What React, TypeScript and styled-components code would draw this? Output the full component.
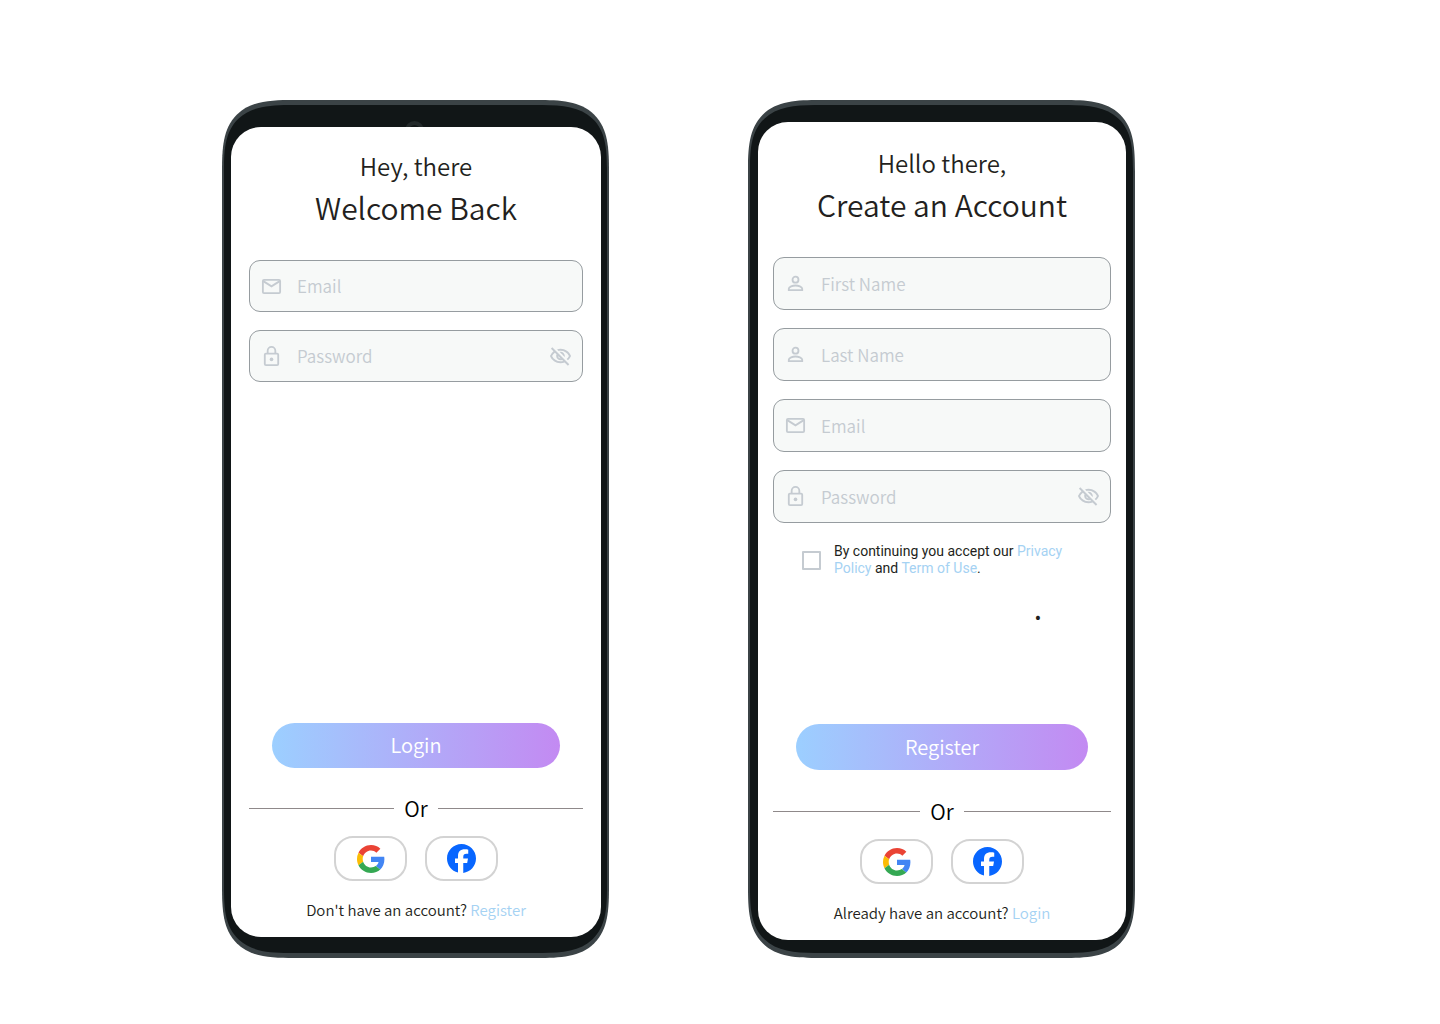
import React, { useId } from "react";
import styled, { createGlobalStyle } from "styled-components";
import { FaFacebook } from "react-icons/fa6";

const font = `"Noto Sans CJK SC", "Noto Sans", sans-serif`;

const GlobalStyle = createGlobalStyle`
  * { box-sizing: border-box; }
  body {
    margin: 0;
    background: #ffffff;
    color: #231f20;
    font-family: ${font};
  }
  button, input { font-family: inherit; }
`;

type Size = "regular" | "tall";

const Page = styled.main`
  display: flex;
  flex-wrap: wrap;
  justify-content: center;
  gap: 64px 139px;
  min-height: 100vh;
  padding: 100px 83px 66px 0;
`;

const Phone = styled.section<{ $size: Size }>`
  position: relative;
  display: flex;
  width: 387px;
  min-height: 858px;
  background: #111617;
  border: solid #3b4346;
  border-width: 5px 2px;
  border-radius: 50px;
  padding: ${(p) => (p.$size === "tall" ? "17px 7px 13px 8px" : "22px 6px 16px 7px")};

  @supports (corner-shape: superellipse(1.6)) {
    border-radius: 72px;
    corner-shape: superellipse(1.6);
  }
`;

const Camera = styled.span`
  position: absolute;
  top: 16px;
  left: 50%;
  width: 19px;
  height: 19px;
  margin-left: -11px;
  border: 4px solid #23292a;
  border-radius: 50%;
`;

const Screen = styled.form<{ $size: Size }>`
  position: relative;
  flex: 1;
  display: flex;
  flex-direction: column;
  background: #ffffff;
  border-radius: 30px;
  padding: ${(p) => (p.$size === "tall" ? "25px 15px 17px" : "23px 18px 17px")};
`;

const Greeting = styled.p`
  margin: 0 0 5px;
  font-size: 24px;
  line-height: 32px;
  font-weight: 350;
  text-align: center;
`;

const Title = styled.h1`
  margin: 0 0 33px;
  font-size: 30px;
  line-height: 40px;
  font-weight: 350;
  text-align: center;
`;

const Fields = styled.div`
  display: flex;
  flex-direction: column;
  gap: 18px;
`;

const FieldBox = styled.label<{ $size: Size }>`
  display: flex;
  align-items: center;
  gap: 14px;
  height: ${(p) => (p.$size === "tall" ? 53 : 52)}px;
  padding: 0 10px;
  background: #f7f9f8;
  border: 1px solid #969ca0;
  border-radius: 11px;
  color: #c5cbd1;

  svg { flex: none; display: block; }
`;

const Input = styled.input`
  flex: 1;
  min-width: 0;
  padding: 0;
  border: 0;
  outline: 0;
  background: transparent;
  color: #231f20;
  font-size: 17px;
  line-height: 24px;
  font-weight: 350;

  &::placeholder { color: #c5cbd1; opacity: 1; }
`;

const IconButton = styled.button`
  flex: none;
  padding: 0;
  border: 0;
  background: none;
  color: inherit;
  cursor: pointer;
`;

const Consent = styled.div`
  display: flex;
  align-items: center;
  gap: 13px;
  margin: 20px 28px 0 29px;
`;

const Checkbox = styled.input`
  appearance: none;
  flex: none;
  width: 19px;
  height: 19px;
  margin: 0;
  border: 2px solid #c5cbd1;
  border-radius: 1px;
  &:checked { background: #9fcfee; }
`;

const ConsentText = styled.label`
  font-family: Roboto, sans-serif;
  font-size: 14px;
  line-height: 17px;
`;

const Link = styled.a`
  color: #a5d2f3;
  text-decoration: none;
`;

const Mark = styled.span`
  align-self: flex-end;
  margin: 15px 69px 0 0;
  font-size: 30px;
  line-height: 30px;
`;

const Actions = styled.div`
  display: flex;
  flex-direction: column;
  align-items: center;
  margin-top: auto;
`;

const Submit = styled.button<{ $size: Size }>`
  align-self: stretch;
  height: ${(p) => (p.$size === "tall" ? 46 : 45)}px;
  margin: 0 23px ${(p) => (p.$size === "tall" ? 27 : 26)}px;
  padding: 0 0 1px;
  border: 0;
  border-radius: 23px;
  background: linear-gradient(90deg, #9ccfff 0%, #c38af2 100%);
  color: #ffffff;
  font-size: 20px;
  line-height: 28px;
  font-weight: 350;
  cursor: pointer;
`;

const Divider = styled.div`
  align-self: stretch;
  display: flex;
  align-items: center;
  gap: 10px;
  margin-bottom: 14px;
  color: #000000;
  font-size: 21px;
  line-height: 28px;
  font-weight: 350;

  &::before, &::after {
    content: "";
    flex: 1;
    height: 1px;
    background: #8f898a;
  }
`;

const Socials = styled.div`
  display: flex;
  gap: 18px;
  margin-bottom: 19px;
`;

const SocialButton = styled.button`
  display: flex;
  align-items: center;
  justify-content: center;
  width: 73px;
  height: 45px;
  padding: 0;
  border: 2px solid #d3d3d3;
  border-radius: 19px;
  background: #ffffff;
  color: #0866ff;
  cursor: pointer;
`;

const Footer = styled.p`
  margin: 0;
  font-size: 15px;
  line-height: 20px;
  font-weight: 350;
`;

const stroke = { fill: "none", stroke: "currentColor", strokeWidth: 1.9 };

const MailIcon = () => (
  <svg width="23" height="23" viewBox="0 0 24 24" aria-hidden="true" {...stroke}>
    <rect x="3" y="5" width="18" height="14" rx="1.2" />
    <path d="M3.4 6.4 12 11.8l8.6-5.4" />
  </svg>
);

const LockIcon = () => (
  <svg width="23" height="23" viewBox="0 0 24 24" aria-hidden="true" {...stroke}>
    <rect x="5" y="9" width="14" height="12" rx="1.2" />
    <path d="M8 9V6a4 4 0 0 1 8 0v3" />
    <circle cx="12" cy="15" r="1.9" fill="currentColor" stroke="none" />
  </svg>
);

const PersonIcon = () => (
  <svg width="23" height="23" viewBox="0 0 24 24" aria-hidden="true" {...stroke}>
    <circle cx="12" cy="8" r="3.1" />
    <path d="M5 19v-1.4c0-2.2 4.1-3.5 7-3.5s7 1.3 7 3.5V19z" />
  </svg>
);

const EyeOffIcon = () => (
  <svg width="23" height="23" viewBox="0 0 24 24" aria-hidden="true" display="block">
    <path
      fill="currentColor"
      d="M12 6c3.79 0 7.17 2.13 8.82 5.5-.59 1.22-1.42 2.27-2.41 3.12l1.41 1.41c1.39-1.23 2.49-2.77 3.18-4.53C21.27 7.11 17 4 12 4c-1.27 0-2.49.2-3.64.57l1.65 1.65C10.66 6.09 11.32 6 12 6zm-1.07 1.14L13 9.21c.57.25 1.03.71 1.28 1.28l2.07 2.07c.08-.34.14-.7.14-1.07C16.5 9.01 14.48 7 12 7c-.37 0-.72.05-1.07.14zM2.01 3.87l2.68 2.68A11.738 11.738 0 0 0 1 11.5C2.73 15.89 7 19 12 19c1.52 0 2.98-.29 4.32-.82l3.42 3.42 1.41-1.41L3.42 2.45 2.01 3.87zm7.5 7.5 2.61 2.61c-.04.01-.08.02-.12.02a2.5 2.5 0 0 1-2.5-2.5c0-.05.01-.08.01-.13zm-3.4-3.4 1.75 1.75a4.6 4.6 0 0 0-.36 1.78 4.507 4.507 0 0 0 6.27 4.14l.98.98c-.88.24-1.8.38-2.75.38-3.79 0-7.17-2.13-8.82-5.5.7-1.43 1.72-2.61 2.93-3.53z"
    />
  </svg>
);

const GoogleLogo = () => (
  <svg width="28" height="28" viewBox="0 0 48 48" aria-hidden="true">
    <path fill="#EA4335" d="M24 9.5c3.54 0 6.71 1.22 9.21 3.6l6.85-6.85C35.9 2.38 30.47 0 24 0 14.62 0 6.51 5.38 2.56 13.22l7.98 6.19C12.43 13.72 17.74 9.5 24 9.5z" />
    <path fill="#4285F4" d="M46.98 24.55c0-1.57-.15-3.09-.38-4.55H24v9.02h12.94c-.58 2.96-2.26 5.48-4.78 7.18l7.73 6c4.51-4.18 7.09-10.36 7.09-17.65z" />
    <path fill="#FBBC05" d="M10.53 28.59A14.5 14.5 0 0 1 9.77 24c0-1.6.27-3.14.76-4.59l-7.98-6.19A23.99 23.99 0 0 0 0 24c0 3.88.92 7.54 2.56 10.78l7.97-6.19z" />
    <path fill="#34A853" d="M24 48c6.48 0 11.93-2.13 15.89-5.81l-7.73-6c-2.15 1.45-4.92 2.3-8.16 2.3-6.26 0-11.57-4.22-13.47-9.91l-7.98 6.19C6.51 42.62 14.62 48 24 48z" />
  </svg>
);

type FieldProps = { label: string; kind: "person" | "mail" | "lock"; size: Size };

const icons = { person: PersonIcon, mail: MailIcon, lock: LockIcon };
const types = { person: "text", mail: "email", lock: "password" };

function Field({ label, kind, size }: FieldProps) {
  const id = useId();
  const Icon = icons[kind];
  return (
    <FieldBox $size={size} htmlFor={id}>
      <Icon />
      <Input id={id} type={types[kind]} placeholder={label} aria-label={label} />
      {kind === "lock" && (
        <IconButton type="button" aria-label="Show password">
          <EyeOffIcon />
        </IconButton>
      )}
    </FieldBox>
  );
}

type ActionProps = { size: Size; submit: string; question: string; link: string };

function ActionArea({ size, submit, question, link }: ActionProps) {
  return (
    <Actions>
      <Submit type="submit" $size={size}>{submit}</Submit>
      <Divider>Or</Divider>
      <Socials>
        <SocialButton type="button" aria-label="Google"><GoogleLogo /></SocialButton>
        <SocialButton type="button" aria-label="Facebook"><FaFacebook size={29} /></SocialButton>
      </Socials>
      <Footer>{question} <Link href="#">{link}</Link></Footer>
    </Actions>
  );
}

export default function App() {
  const consentId = useId();
  return (
    <>
      <GlobalStyle />
      <Page>
        <Phone $size="regular">
          <Camera />
          <Screen $size="regular" onSubmit={(e) => e.preventDefault()}>
            <Greeting>Hey, there</Greeting>
            <Title>Welcome Back</Title>
            <Fields>
              <Field size="regular" kind="mail" label="Email" />
              <Field size="regular" kind="lock" label="Password" />
            </Fields>
            <ActionArea size="regular" submit="Login" question="Don't have an account?" link="Register" />
          </Screen>
        </Phone>
        <Phone $size="tall">
          <Screen $size="tall" onSubmit={(e) => e.preventDefault()}>
            <Greeting>Hello there,</Greeting>
            <Title>Create an Account</Title>
            <Fields>
              <Field size="tall" kind="person" label="First Name" />
              <Field size="tall" kind="person" label="Last Name" />
              <Field size="tall" kind="mail" label="Email" />
              <Field size="tall" kind="lock" label="Password" />
            </Fields>
            <Consent>
              <Checkbox id={consentId} type="checkbox" />
              <ConsentText htmlFor={consentId}>
                By continuing you accept our <Link href="#">Privacy Policy</Link> and <Link href="#">Term of Use</Link>.
              </ConsentText>
            </Consent>
            <Mark>.</Mark>
            <ActionArea size="tall" submit="Register" question="Already have an account?" link="Login" />
          </Screen>
        </Phone>
      </Page>
    </>
  );
}
